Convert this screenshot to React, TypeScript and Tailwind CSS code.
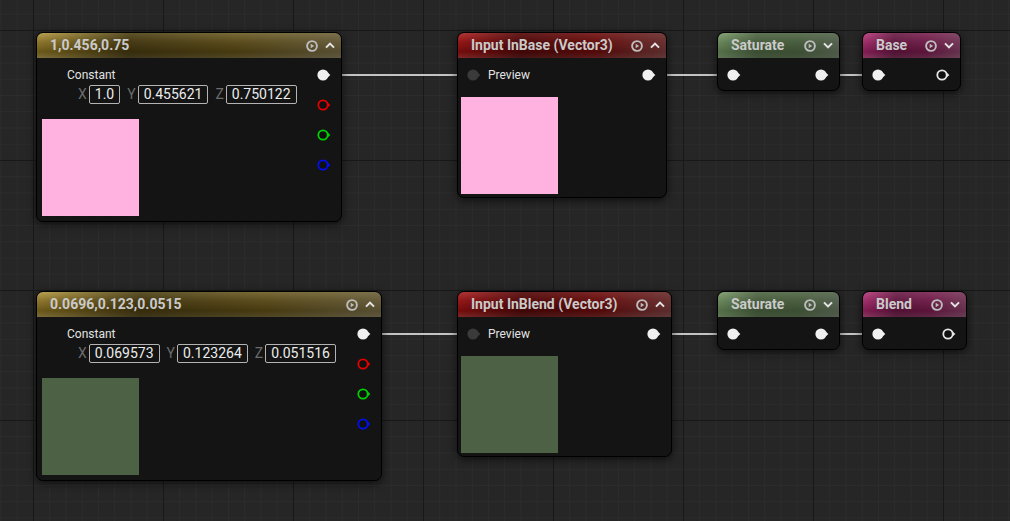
import type { ReactNode } from 'react'

type PinKind = 'white' | 'red' | 'green' | 'blue' | 'hollow' | 'dim'

function Pin({ kind }: { kind: PinKind }) {
  if (kind === 'white' || kind === 'dim') {
    const c = kind === 'white' ? '#f0f0f0' : '#3a3a3a'
    return (
      <svg width="14" height="12" viewBox="0 0 14 12" className="block shrink-0 overflow-visible">
        <circle cx="6" cy="6" r="5.6" fill={c} />
        <polygon points="10.6,3.4 13.4,6 10.6,8.6" fill={c} />
      </svg>
    )
  }
  const c = { red: '#e40000', green: '#00d000', blue: '#0010f0', hollow: '#e6e6e6' }[kind]
  return (
    <svg width="14" height="12" viewBox="0 0 14 12" className="block shrink-0 overflow-visible">
      <circle cx="6" cy="6" r="4.7" fill="#101010" stroke={c} strokeWidth="1.8" />
      <polygon points="10.6,3.6 13.4,6 10.6,8.4" fill={c} />
    </svg>
  )
}

function PlayIcon() {
  return (
    <svg width="12" height="12" viewBox="0 0 12 12" className="block">
      <circle cx="6" cy="6" r="4.9" fill="none" stroke="#bdbdbd" strokeWidth="1.9" />
      <polygon points="4.7,3.7 8.2,6 4.7,8.3" fill="#bdbdbd" />
    </svg>
  )
}

function Chevron({ up }: { up: boolean }) {
  return (
    <svg width="10" height="7" viewBox="0 0 10 7" className="block">
      <polyline
        points={up ? '1,5.6 5,1.6 9,5.6' : '1,1.4 5,5.4 9,1.4'}
        fill="none"
        stroke="#e4e4e4"
        strokeWidth="2"
      />
    </svg>
  )
}

const headers = {
  gold: 'bg-[linear-gradient(to_right,rgba(0,0,0,0)_0%,rgba(0,0,0,0.5)_30%,rgba(0,0,0,0.35)_65%,rgba(70,70,70,0.55)_100%),linear-gradient(to_bottom,#bba454_0%,#8d762d_35%,#6b5818_75%,#7d6d38_100%)]',
  red: 'bg-[linear-gradient(to_right,rgba(0,0,0,0)_0%,rgba(0,0,0,0.45)_30%,rgba(0,0,0,0.3)_65%,rgba(70,70,70,0.55)_100%),linear-gradient(to_bottom,#b43636_0%,#931818_35%,#740c0c_75%,#802828_100%)]',
  green: 'bg-[linear-gradient(to_right,rgba(0,0,0,0)_0%,rgba(0,0,0,0.3)_32%,rgba(0,0,0,0.3)_65%,rgba(70,70,70,0.55)_100%),linear-gradient(to_bottom,#88a678_0%,#6a875c_35%,#546f48_75%,#5f7755_100%)]',
  pink: 'bg-[linear-gradient(to_right,rgba(0,0,0,0)_0%,rgba(0,0,0,0.38)_32%,rgba(0,0,0,0.3)_65%,rgba(70,70,70,0.5)_100%),linear-gradient(to_bottom,#c14e8c_0%,#a2306c_35%,#821c53_75%,#8c3862_100%)]',
}

function Node({
  className,
  tone,
  title,
  up,
  children,
}: {
  className: string
  tone: keyof typeof headers
  title: string
  up: boolean
  children: ReactNode
}) {
  return (
    <div
      className={`absolute rounded-[7px] border border-black bg-[#131413] shadow-[0_2px_8px_rgba(0,0,0,0.65)] ${className}`}
    >
      <div className={`flex h-[25px] items-center rounded-t-[6px] pl-[13px] pr-[6px] ${headers[tone]}`}>
        <span className="flex-1 truncate text-[14px] font-bold text-[#cacaca]">{title}</span>
        <PlayIcon />
        <span className="ml-[7px]">
          <Chevron up={up} />
        </span>
      </div>
      {children}
    </div>
  )
}

function Field({ label, value, first }: { label: string; value: string; first?: boolean }) {
  return (
    <div className={`flex items-center ${first ? '' : 'ml-[7px]'}`}>
      <span className="mr-[2px] text-[14px] text-[#6c6c6c]">{label}</span>
      <span className="h-[19px] rounded-[2px] border border-[#b4b4b4] px-[5px] text-[14px] leading-[17px] text-[#ececec]">
        {value}
      </span>
    </div>
  )
}

function ConstantNode({
  className,
  title,
  values,
  swatch,
}: {
  className: string
  title: string
  values: [string, string, string]
  swatch: string
}) {
  return (
    <Node className={className} tone="gold" title={title} up>
      <div className="flex justify-between pb-[5px] pl-[5px] pr-[10px] pt-[9px]">
        <div className="flex flex-col">
          <span className="ml-[25px] h-[16px] text-[12px] leading-[16px] text-[#e2e2e2]">Constant</span>
          <div className="ml-[36px] mt-[2px] flex h-[19px] items-center">
            <Field label="X" value={values[0]} first />
            <Field label="Y" value={values[1]} />
            <Field label="Z" value={values[2]} />
          </div>
          <div className={`mt-[15px] h-[97px] w-[97px] ${swatch}`} />
        </div>
        <div className="mt-[2px] flex flex-col gap-[18px]">
          <Pin kind="white" />
          <Pin kind="red" />
          <Pin kind="green" />
          <Pin kind="blue" />
        </div>
      </div>
    </Node>
  )
}

function InputNode({ className, title, swatch }: { className: string; title: string; swatch: string }) {
  return (
    <Node className={className} tone="red" title={title} up>
      <div className="flex flex-col px-[3px] pb-[3px] pt-[11px]">
        <div className="flex h-[12px] items-center justify-between pl-[6px] pr-[7px]">
          <div className="flex items-center gap-[7px]">
            <Pin kind="dim" />
            <span className="text-[12px] text-[#e2e2e2]">Preview</span>
          </div>
          <Pin kind="white" />
        </div>
        <div className={`mt-[16px] h-[97px] w-[97px] ${swatch}`} />
      </div>
    </Node>
  )
}

function SmallNode({
  className,
  tone,
  title,
  output,
}: {
  className: string
  tone: 'green' | 'pink'
  title: string
  output: PinKind
}) {
  return (
    <Node className={className} tone={tone} title={title} up={false}>
      <div className="flex items-center justify-between pb-[9px] pl-[9px] pr-[10px] pt-[11px]">
        <Pin kind="white" />
        <Pin kind={output} />
      </div>
    </Node>
  )
}

export default function App() {
  return (
    <div className="relative h-[521px] w-[1010px] overflow-hidden bg-[#262626] bg-[linear-gradient(to_right,#181818_1px,transparent_1px),linear-gradient(to_bottom,#181818_1px,transparent_1px),linear-gradient(to_right,#2c2c2c_1px,transparent_1px),linear-gradient(to_bottom,#2c2c2c_1px,transparent_1px)] bg-size-[130px_130px,130px_130px,16.25px_16.25px,16.25px_16.25px] bg-position-[33px_30px] font-[Roboto,sans-serif]">
      <svg width="1010" height="521" className="absolute inset-0">
        <g stroke="#c4c4c4" strokeWidth="2">
          <line x1="327" y1="75" x2="468" y2="75" />
          <line x1="652" y1="75" x2="734" y2="75" />
          <line x1="825" y1="75" x2="879" y2="75" />
          <line x1="367" y1="334" x2="468" y2="334" />
          <line x1="657" y1="334" x2="734" y2="334" />
          <line x1="825" y1="334" x2="879" y2="334" />
        </g>
      </svg>

      <ConstantNode
        className="left-[36px] top-[32px] w-[306px]"
        title="1,0.456,0.75"
        values={['1.0', '0.455621', '0.750122']}
        swatch="bg-[#ffb1e0]"
      />
      <InputNode className="left-[457px] top-[32px] w-[210px]" title="Input InBase (Vector3)" swatch="bg-[#ffb1e0]" />
      <SmallNode className="left-[717px] top-[32px] w-[123px]" tone="green" title="Saturate" output="white" />
      <SmallNode className="left-[862px] top-[32px] w-[99px]" tone="pink" title="Base" output="hollow" />

      <ConstantNode
        className="left-[36px] top-[291px] w-[346px]"
        title="0.0696,0.123,0.0515"
        values={['0.069573', '0.123264', '0.051516']}
        swatch="bg-[#4d6244]"
      />
      <InputNode className="left-[457px] top-[291px] w-[215px]" title="Input InBlend (Vector3)" swatch="bg-[#4d6244]" />
      <SmallNode className="left-[717px] top-[291px] w-[123px]" tone="green" title="Saturate" output="white" />
      <SmallNode className="left-[862px] top-[291px] w-[105px]" tone="pink" title="Blend" output="hollow" />
    </div>
  )
}
